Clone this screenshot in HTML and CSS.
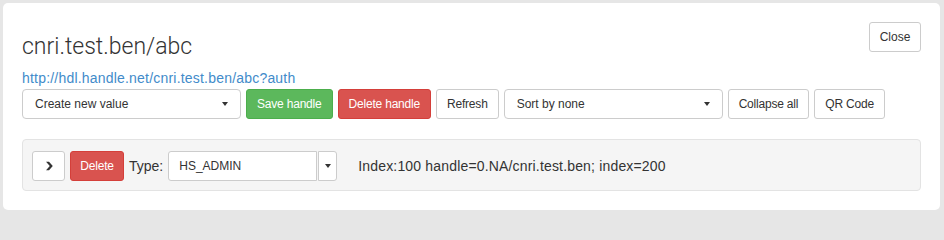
FILE: index.html
```html
<!DOCTYPE html>
<html>
<head>
<meta charset="utf-8">
<link rel="stylesheet" href="styles.css">
</head>
<body>
<div class="panel">
  <div class="header">
    <h3 class="title">cnri.test.ben/abc</h3>
    <button class="btn btn-close">Close</button>
  </div>
  <div class="linkline"><a class="link" href="#">http://hdl.handle.net/cnri.test.ben/abc?auth</a></div>
  <div class="toolbar">
    <div class="select"><span>Create new value</span><i class="caret"></i></div>
    <button class="btn btn-success">Save handle</button>
    <button class="btn btn-danger">Delete handle</button>
    <button class="btn">Refresh</button>
    <div class="select select-sort"><span>Sort by none</span><i class="caret"></i></div>
    <button class="btn">Collapse all</button>
    <button class="btn">QR Code</button>
  </div>
  <div class="well">
    <button class="btn btn-expand"><svg width="10" height="10" viewBox="0 0 10 10"><path d="M2 0.8 L5 0.8 L8.8 5 L5 9.2 L2 9.2 L5.8 5 Z" fill="#333"/></svg></button>
    <button class="btn btn-danger btn-del">Delete</button>
    <label class="type-label">Type:</label>
    <div class="input-group">
      <div class="type-input">HS_ADMIN</div>
      <button class="btn btn-caret"><i class="caret"></i></button>
    </div>
    <span class="index-text">Index:100 handle=0.NA/cnri.test.ben; index=200</span>
  </div>
</div>
</body>
</html>
```
FILE: styles.css
```css
* { box-sizing: border-box; }
html, body { margin: 0; padding: 0; }
body {
  background: #e6e6e6;
  font-family: "Liberation Sans", Arial, sans-serif;
  color: #333;
  font-size: 14px;
  width: 944px;
  height: 214px;
  overflow: hidden;
}
.panel {
  margin: 3px 4px 0 3px;
  height: 207px;
  background: #fff;
  border-radius: 5px;
  padding: 19px;
}
.header {
  display: flex;
  justify-content: space-between;
  align-items: flex-start;
}
.title {
  margin: 12px 0 8px;
  font-family: "Roboto", "Liberation Sans", sans-serif;
  font-weight: 300;
  font-size: 23px;
  line-height: 26px;
  color: #333;
}
.linkline {
  line-height: 20px;
  height: 20px;
  font-size: 14px;
  letter-spacing: 0.2px;
}
.link {
  color: #428bca;
  text-decoration: none;
}
.toolbar {
  display: flex;
  gap: 5px;
  margin-top: 1px;
}
.btn {
  display: inline-flex;
  align-items: center;
  justify-content: center;
  flex-shrink: 0;
  white-space: nowrap;
  height: 30px;
  padding: 0 10px;
  font-family: "Liberation Sans", Arial, sans-serif;
  font-size: 12px;
  letter-spacing: -0.2px;
  color: #333;
  background: #fff;
  border: 1px solid #ccc;
  border-radius: 3px;
  cursor: pointer;
}
.btn-success {
  background: #5cb85c;
  border-color: #4cae4c;
  color: #fff;
}
.btn-danger {
  background: #d9534f;
  border-color: #d43f3a;
  color: #fff;
}
.select {
  flex-shrink: 0;
  white-space: nowrap;
  width: 219px;
  height: 30px;
  border: 1px solid #ccc;
  border-radius: 4px;
  background: #fff;
  display: flex;
  align-items: center;
  justify-content: space-between;
  padding: 0 12px 0 12px;
  font-size: 12px;
}
.caret {
  display: inline-block;
  width: 0;
  height: 0;
  border-top: 4px solid #333;
  border-left: 3.5px solid transparent;
  border-right: 3.5px solid transparent;
}
.btn-close { width: 52px; letter-spacing: 0; }
.well {
  margin-top: 20px;
  background: #f5f5f5;
  border: 1px solid #e3e3e3;
  border-radius: 4px;
  height: 52px;
  padding: 11px 9px 9px;
  display: flex;
  align-items: center;
}
.btn-expand {
  width: 33px;
  padding: 0;
}
.btn-expand svg { display: block; }
.btn-del {
  margin-left: 5px;
  width: 54px;
  padding: 0;
}
.type-label {
  margin-left: 5px;
  font-size: 14px;
}
.input-group {
  display: flex;
  gap: 1px;
  margin-left: 5px;
}
.type-input {
  width: 149px;
  height: 30px;
  border: 1px solid #ccc;
  border-radius: 3px 0 0 3px;
  background: #fff;
  font-size: 12px;
  padding: 0 10px;
  display: flex;
  align-items: center;
}
.btn-caret {
  width: 19px;
  padding: 0;
  border-radius: 0 3px 3px 0;
}
.index-text {
  margin-left: 21px;
  font-size: 14px;
  letter-spacing: 0.17px;
}
```
